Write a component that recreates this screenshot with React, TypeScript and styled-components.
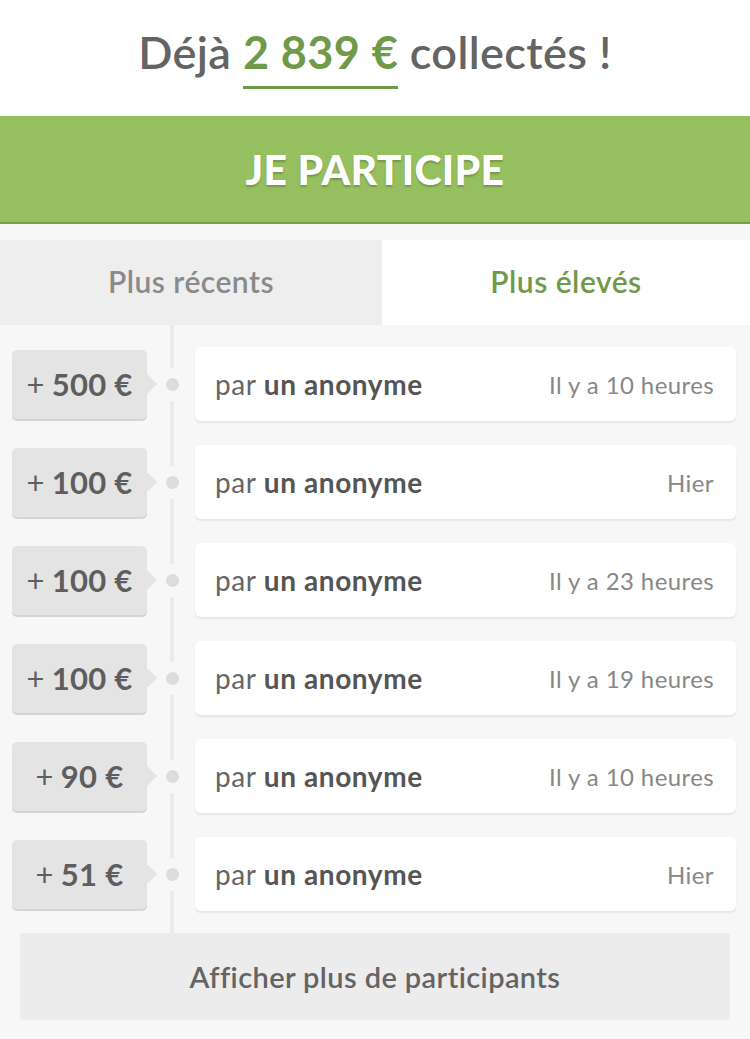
import styled, { createGlobalStyle } from 'styled-components'

const GlobalStyle = createGlobalStyle`
  html, body {
    margin: 0;
    padding: 0;
    background: #f7f7f7;
  }
  body {
    font-family: Lato, 'Open Sans', sans-serif;
    -webkit-font-smoothing: antialiased;
  }
`

const Page = styled.div`
  width: 750px;
  min-height: 1039px;
  background: #f7f7f7;
`

const Header = styled.div`
  height: 116px;
  background: #fff;
  display: flex;
  justify-content: center;
  align-items: flex-start;
`

const Title = styled.h1`
  margin: 22px 0 0;
  font-size: 45px;
  font-weight: 600;
  color: #646464;
  letter-spacing: 0.4px;
  line-height: 60px;
  white-space: nowrap;
`

const Amount = styled.span`
  color: #6f9a49;
  font-weight: 700;
  display: inline-block;
  border-bottom: 3px solid #6f9a49;
  line-height: 60px;
  padding-bottom: 4px;
`

const CtaButton = styled.button`
  display: block;
  width: 100%;
  height: 108px;
  border: none;
  border-bottom: 2px solid #78a04a;
  background: #96c05f;
  color: #fff;
  font-family: inherit;
  font-size: 41px;
  font-weight: 900;
  letter-spacing: 0.3px;
  text-shadow: 0 2px 2px rgba(0, 0, 0, 0.22);
  cursor: pointer;
`

const Tabs = styled.div`
  display: grid;
  grid-template-columns: 382px 1fr;
  margin-top: 16px;
  height: 85px;
`

const Tab = styled.div<{ $active?: boolean }>`
  display: flex;
  align-items: center;
  justify-content: center;
  background: ${({ $active }) => ($active ? '#fff' : '#eeeeee')};
  color: ${({ $active }) => ($active ? '#6f9a49' : '#8a8a8a')};
  font-size: 30px;
  font-weight: 600;
  letter-spacing: 0.5px;
  padding-bottom: 4px;
`

const List = styled.div`
  display: flex;
  flex-direction: column;
  gap: 24px;
  padding: 22px 0 22px;
  background-image: linear-gradient(#ebebeb, #ebebeb);
  background-size: 4px 100%;
  background-position: 170px 0;
  background-repeat: no-repeat;
`

const Row = styled.div`
  display: grid;
  grid-template-columns: 135px 48px 1fr;
  align-items: center;
  padding: 0 14px 0 12px;
  height: 74px;
`

const Badge = styled.div`
  position: relative;
  height: 69px;
  border-radius: 5px;
  background: #e4e4e4;
  box-shadow: 0 2px 0 #d4d4d4;
  display: flex;
  align-items: center;
  justify-content: center;
  color: #5e5e5e;
  font-size: 31px;
  font-weight: 700;
  letter-spacing: 0.3px;
  &::after {
    content: '';
    position: absolute;
    right: -10px;
    top: 50%;
    margin-top: -10px;
    border-style: solid;
    border-width: 10px 0 10px 10px;
    border-color: transparent transparent transparent #e4e4e4;
  }
`

const Plus = styled.span`
  font-weight: 400;
  margin-right: 7px;
`

const Connector = styled.div`
  display: flex;
  justify-content: center;
  padding-left: 2px;
`

const Dot = styled.span`
  width: 13px;
  height: 13px;
  border-radius: 50%;
  background: #dcdcdc;
  box-shadow: 0 0 0 10px #f7f7f7;
`

const Card = styled.div`
  height: 74px;
  background: #fff;
  border-radius: 6px;
  box-shadow: 0 2px 2px rgba(0, 0, 0, 0.07);
  display: flex;
  align-items: center;
  justify-content: space-between;
  padding: 0 22px 0 20px;
  box-sizing: border-box;
`

const Donor = styled.span`
  font-size: 28px;
  color: #666;
  letter-spacing: 0.6px;
  b {
    color: #555;
    font-weight: 700;
  }
`

const When = styled.span`
  font-size: 24px;
  color: #888;
  letter-spacing: 0.4px;
`

const MoreButton = styled.button`
  display: block;
  width: 710px;
  height: 87px;
  margin: 0 20px 19px;
  border: none;
  border-radius: 3px;
  background: #ececec;
  color: #646464;
  font-family: inherit;
  font-size: 29px;
  font-weight: 600;
  letter-spacing: 0.4px;
  cursor: pointer;
`

const donations = [
  { amount: '500', when: 'Il y a 10 heures' },
  { amount: '100', when: 'Hier' },
  { amount: '100', when: 'Il y a 23 heures' },
  { amount: '100', when: 'Il y a 19 heures' },
  { amount: '90', when: 'Il y a 10 heures' },
  { amount: '51', when: 'Hier' },
]

const App = () => {
  return (
    <Page>
      <GlobalStyle />
      <Header>
        <Title>
          Déjà <Amount>2 839 €</Amount> collectés !
        </Title>
      </Header>
      <CtaButton>JE PARTICIPE</CtaButton>
      <Tabs>
        <Tab>Plus récents</Tab>
        <Tab $active>Plus élevés</Tab>
      </Tabs>
      <List>
        {donations.map((d, i) => (
          <Row key={i}>
            <Badge>
              <Plus>+</Plus>
              {d.amount} €
            </Badge>
            <Connector>
              <Dot />
            </Connector>
            <Card>
              <Donor>
                par <b>un anonyme</b>
              </Donor>
              <When>{d.when}</When>
            </Card>
          </Row>
        ))}
      </List>
      <MoreButton>Afficher plus de participants</MoreButton>
    </Page>
  )
}

export default App
